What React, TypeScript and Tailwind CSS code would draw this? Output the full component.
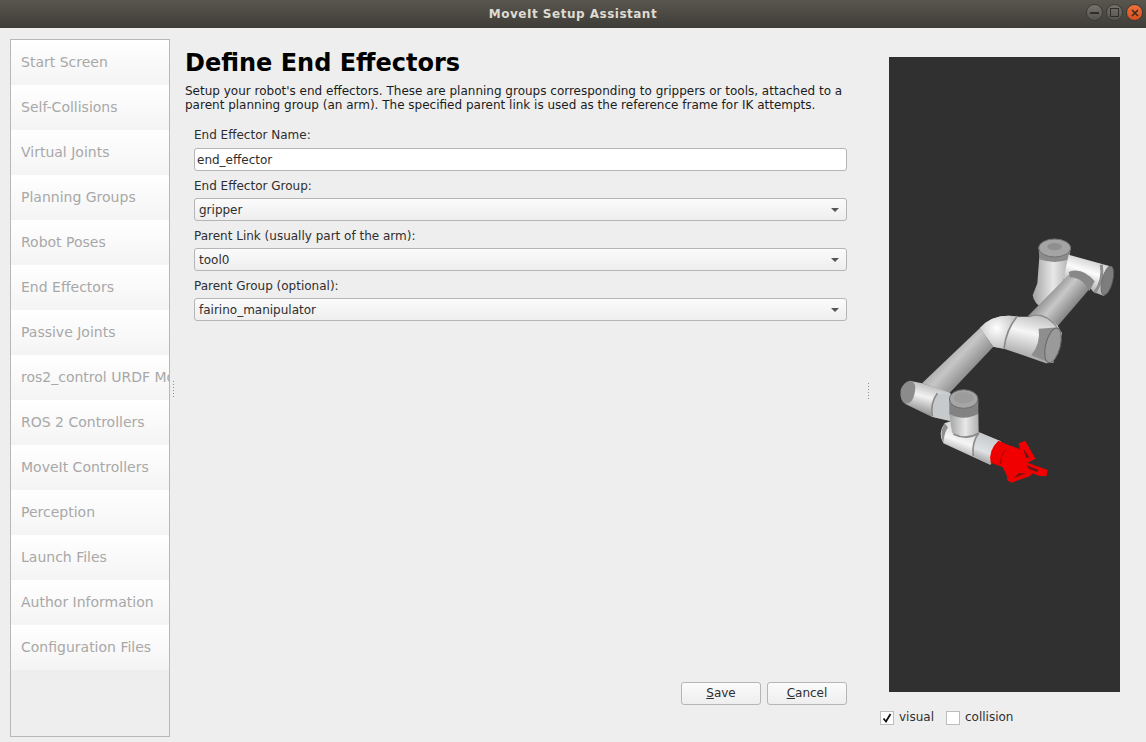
import React from "react";

const navItems = [
  "Start Screen",
  "Self-Collisions",
  "Virtual Joints",
  "Planning Groups",
  "Robot Poses",
  "End Effectors",
  "Passive Joints",
  "ros2_control URDF Modifications",
  "ROS 2 Controllers",
  "MoveIt Controllers",
  "Perception",
  "Launch Files",
  "Author Information",
  "Configuration Files",
];

const fields = [
  { label: "End Effector Group:", value: "gripper" },
  { label: "Parent Link (usually part of the arm):", value: "tool0" },
  { label: "Parent Group (optional):", value: "fairino_manipulator" },
];

const handleDots = [0, 1, 2, 3, 4, 5];

// coordinates are 3x screen pixels, offset from the crop at (880, 220)
function Robot() {
  return (
    <svg className="block h-full w-full" viewBox="27 -489 693 1905">
      <defs>
        <linearGradient id="upperArm" gradientUnits="userSpaceOnUse" x1="200" y1="395" x2="270" y2="460">
          <stop offset="0" stopColor="#a8a8a8" />
          <stop offset="0.4" stopColor="#c6c6c6" />
          <stop offset="1" stopColor="#8c8c8c" />
        </linearGradient>
        <linearGradient id="foreArm" gradientUnits="userSpaceOnUse" x1="505" y1="215" x2="570" y2="270">
          <stop offset="0" stopColor="#8f8f8f" />
          <stop offset="0.45" stopColor="#c8c8c8" />
          <stop offset="1" stopColor="#8a8a8a" />
        </linearGradient>
        <linearGradient id="elbow" gradientUnits="userSpaceOnUse" x1="450" y1="285" x2="420" y2="410">
          <stop offset="0" stopColor="#c4c4c4" />
          <stop offset="0.4" stopColor="#f6f6f6" />
          <stop offset="1" stopColor="#a8a8a8" />
        </linearGradient>
        <radialGradient id="bend" gradientUnits="userSpaceOnUse" cx="350" cy="325" r="70">
          <stop offset="0" stopColor="#ffffff" />
          <stop offset="1" stopColor="#bcbcbc" />
        </radialGradient>
        <linearGradient id="lowerElbow" gradientUnits="userSpaceOnUse" x1="140" y1="490" x2="115" y2="575">
          <stop offset="0" stopColor="#bcbcbc" />
          <stop offset="0.45" stopColor="#f2f2f2" />
          <stop offset="1" stopColor="#969696" />
        </linearGradient>
        <linearGradient id="vertical" x1="0" y1="0" x2="1" y2="0">
          <stop offset="0" stopColor="#a2a2a2" />
          <stop offset="0.55" stopColor="#e8e8e8" />
          <stop offset="1" stopColor="#b0b0b0" />
        </linearGradient>
        <linearGradient id="wristLink" gradientUnits="userSpaceOnUse" x1="270" y1="630" x2="240" y2="710">
          <stop offset="0" stopColor="#d8d8d8" />
          <stop offset="0.5" stopColor="#f6f6f6" />
          <stop offset="1" stopColor="#a4a4a4" />
        </linearGradient>
        <linearGradient id="flange" gradientUnits="userSpaceOnUse" x1="330" y1="650" x2="300" y2="725">
          <stop offset="0" stopColor="#c6cacc" />
          <stop offset="0.6" stopColor="#dfe1e3" />
          <stop offset="1" stopColor="#a0a0a0" />
        </linearGradient>
        <linearGradient id="topElbow" gradientUnits="userSpaceOnUse" x1="640" y1="125" x2="610" y2="215">
          <stop offset="0" stopColor="#d6d6d6" />
          <stop offset="0.35" stopColor="#fcfcfc" />
          <stop offset="1" stopColor="#a6a6a6" />
        </linearGradient>
      </defs>

      {/* base link, top right */}
      <path d="M478 112 L472 190 L458 226 Q462 252 490 266 L548 190 L570 112Z" fill="url(#vertical)" />
      <path d="M476 84 L478 118 Q525 134 568 118 L572 84Z" fill="#8b8b8b" />
      <ellipse cx="524" cy="84" rx="48" ry="27" fill="#a4a4a4" stroke="#737373" strokeWidth="3" />
      <ellipse cx="524" cy="80" rx="22" ry="11" fill="#8f8f8f" />
      <path d="M566 104 L696 140 L672 228 L640 216 L598 160 L548 190 Z" fill="url(#topElbow)" />
      <path d="M664 134 Q672 180 644 218" fill="none" stroke="#8e8e8e" strokeWidth="9" />
      <ellipse cx="682" cy="182" rx="16" ry="45" transform="rotate(14 682 182)" fill="#7d7d7d" stroke="#5c5c5c" strokeWidth="2" />

      {/* fore arm */}
      <path d="M572 158 L636 198 L530 322 L444 288Z" fill="url(#foreArm)" />
      <path d="M566 156 Q606 140 644 184 L628 214 Q608 172 570 172Z" fill="#888888" />

      {/* center elbow */}
      <path d="M300 324 Q342 278 412 290 L446 290 Q484 268 532 316 L546 340 L520 428 L498 430 L372 386 L340 380Z" fill="url(#elbow)" />
      <path d="M300 324 Q342 278 412 290 Q378 330 372 386 L340 380Z" fill="url(#bend)" />
      <path d="M476 326 L536 322 L512 430 L454 406 Q482 370 476 326Z" fill="#8e8e8e" />
      <ellipse cx="519" cy="376" rx="22" ry="53" transform="rotate(14 519 376)" fill="#9a9a9a" stroke="#666666" strokeWidth="3" />
      <path d="M412 288 Q378 330 372 386" fill="none" stroke="#8a8a8a" strokeWidth="5" />
      <path d="M446 290 Q490 272 530 320" fill="none" stroke="#8a8a8a" strokeWidth="4" />

      {/* long link */}
      <path d="M300 324 L340 380 L208 520 L126 490Z" fill="url(#upperArm)" />

      {/* lower elbow */}
      <path d="M88 482 L126 490 L210 518 L214 604 L150 588 L76 552Z" fill="url(#lowerElbow)" />
      <path d="M170 522 L212 520 L214 604 L154 590 Q150 550 170 522Z" fill="#c6cacc" />
      <path d="M172 520 Q150 550 157 590" fill="none" stroke="#8a8a8a" strokeWidth="5" />
      <path d="M90 482 Q112 486 104 520 Q98 552 76 552 Q58 540 62 510 Q70 486 90 482Z" fill="#8b8b8b" />

      {/* lower wrist */}
      <path d="M194 610 Q172 640 190 670 L330 734 L362 664 L296 636 L222 600Z" fill="url(#wristLink)" />
      <path d="M194 610 Q176 640 190 670 Q192 640 204 622Z" fill="#8f8f8f" />
      <path d="M296 638 L362 664 L332 734 L278 708 Q274 668 296 638Z" fill="url(#flange)" />
      <path d="M298 636 Q274 668 280 708" fill="none" stroke="#8a8a8a" strokeWidth="5" />
      <path d="M208 580 L216 638 Q258 664 296 640 L295 580Z" fill="url(#vertical)" />
      <path d="M220 642 Q258 662 296 640" fill="none" stroke="#8a8a8a" strokeWidth="5" />
      <path d="M208 540 L208 582 Q250 604 295 582 L295 540Z" fill="#828282" />
      <ellipse cx="251" cy="537" rx="43" ry="28" fill="#a6a6a6" stroke="#6c6c6c" strokeWidth="3" />
      <ellipse cx="251" cy="533" rx="30" ry="17" fill="#9c9c9c" />

      {/* gripper, offset from the crop at (970, 420) */}
      <g transform="translate(270 600)">
        <path d="M85 62 L128 80 L100 142 L62 128 Q54 92 85 62Z" fill="#ee0000" />
        <path d="M108 88 Q92 104 92 132" fill="none" stroke="#a80000" strokeWidth="3" />
        <path
          d="M125 78 L150 88 L146 70 L166 62 L196 116 L172 128 L233 150 L229 169 L205 167 L172 152 L192 156 L180 168 L125 188 L112 181 L110 165 L96 138Z"
          fill="#f00000"
        />
        <path d="M160 86 L178 112 L168 114Z" fill="#5e1a1a" />
        <path d="M170 136 L206 150 L200 156 L176 146Z" fill="#5e1a1a" />
        <path d="M132 174 L168 160 L146 160Z" fill="#6a1616" />
      </g>
    </svg>
  );
}

function Combo({ value }: { value: string }) {
  return (
    <div className="flex h-[23px] items-center justify-between rounded-[3px] border border-[#b5b5b5] bg-gradient-to-b from-[#fbfbfb] to-[#eeeeee] pl-1 pr-[7px]">
      <span className="pt-px">{value}</span>
      <span className="h-0 w-0 border-x-[4px] border-t-[4px] border-x-transparent border-t-[#555555]" />
    </div>
  );
}

function Button({ accel, rest }: { accel: string; rest: string }) {
  return (
    <button className="h-[23px] w-[80px] rounded-[3px] border border-[#b5b5b5] bg-gradient-to-b from-[#fbfbfb] to-[#eeeeee] text-[#2e2e2e]">
      <span className="underline">{accel}</span>
      {rest}
    </button>
  );
}

function Check({ checked, label }: { checked?: boolean; label: string }) {
  return (
    <label className="flex items-center gap-[5px]">
      <span className="flex h-[14px] w-[14px] items-center justify-center border border-[#bdbdbd] bg-white">
        {checked && (
          <svg width="10" height="10" viewBox="0 0 10 10">
            <path d="M1.5 5.5 L4 8.5 L8.5 1" fill="none" stroke="#111" strokeWidth="1.8" />
          </svg>
        )}
      </span>
      {label}
    </label>
  );
}

function SplitHandle({ className }: { className: string }) {
  return (
    <div className={className}>
      {handleDots.map((dot) => (
        <span key={dot} className="h-px w-px bg-[#8f8f8f]" />
      ))}
    </div>
  );
}

export default function App() {
  return (
    <div className="flex h-[742px] w-[1146px] flex-col overflow-hidden bg-[#eeeeee] font-['DejaVu_Sans',sans-serif] text-[12px] leading-[15px] text-[#2e2e2e]">
      {/* Title bar */}
      <header className="relative flex h-[28px] shrink-0 items-center justify-center bg-gradient-to-b from-[#59564e] to-[#3f3d38]">
        <span className="text-[12px] font-bold tracking-[0.5px] text-[#dfdbd2]">MoveIt Setup Assistant</span>
        <div className="absolute right-[3px] top-[4px] flex gap-[3px]">
          <span className="flex h-[17px] w-[17px] items-center justify-center rounded-full border border-[#3a3a36] bg-gradient-to-b from-[#75736c] to-[#55534d]">
            <span className="h-[2px] w-[9px] bg-[#2f2e2a]" />
          </span>
          <span className="flex h-[17px] w-[17px] items-center justify-center rounded-full border border-[#3a3a36] bg-gradient-to-b from-[#75736c] to-[#55534d]">
            <span className="h-[9px] w-[9px] border border-[#2f2e2a]" />
          </span>
          <span className="flex h-[17px] w-[17px] items-center justify-center rounded-full border border-[#3a3a36] bg-gradient-to-b from-[#f0703a] to-[#d9501e]">
            <svg width="8" height="8" viewBox="0 0 8 8">
              <path d="M1 1 L7 7 M7 1 L1 7" stroke="#3a2a20" strokeWidth="1.6" />
            </svg>
          </span>
        </div>
      </header>

      <div className="flex min-h-0 flex-1 pl-[10px]">
        {/* Step list */}
        <nav className="mb-[5px] mt-[11px] w-[160px] shrink-0 overflow-hidden border border-[#b8b8b8] bg-[#eeeeee]">
          {navItems.map((item) => (
            <div
              key={item}
              className="flex h-[45px] items-center overflow-hidden whitespace-nowrap bg-gradient-to-b from-white to-[#f4f4f4] pl-[10px] text-[14px] text-[#a8a8a8]"
            >
              {item}
            </div>
          ))}
        </nav>

        {/* Form */}
        <main className="relative flex w-[698px] shrink-0 flex-col pl-[15px]">
          <SplitHandle className="absolute left-[3px] top-[353px] flex flex-col gap-[2px]" />
          <h1 className="mt-[20px] text-[24px] font-bold leading-[30px] text-black">Define End Effectors</h1>
          <p className="mt-[6px] w-[670px] leading-[14px] text-[#1c1c1c]">
            Setup your robot's end effectors. These are planning groups corresponding to grippers or tools, attached to
            a parent planning group (an arm). The specified parent link is used as the reference frame for IK attempts.
          </p>
          <div className="ml-[9px] mt-[16px] w-[653px]">
            <div className="mb-[5px]">End Effector Name:</div>
            <div className="flex h-[23px] items-center rounded-[3px] border border-[#b5b5b5] bg-white pl-[2px]">
              <span className="pt-px">end_effector</span>
            </div>
            {fields.map((field) => (
              <div key={field.label}>
                <div className="mb-[4px] mt-[8px]">{field.label}</div>
                <Combo value={field.value} />
              </div>
            ))}
          </div>
          <div className="ml-auto mr-[21px] mt-auto flex gap-[6px] pb-[37px]">
            <Button accel="S" rest="ave" />
            <Button accel="C" rest="ancel" />
          </div>
        </main>

        {/* 3D view */}
        <aside className="relative flex flex-1 flex-col pl-[12px] pr-[26px]">
          <SplitHandle className="absolute left-0 top-[355px] flex flex-col gap-[2px]" />
          <div className="ml-[9px] mt-[29px] h-[635px] w-[231px] bg-[#303030]">
            <Robot />
          </div>
          <div className="mt-[18px] flex gap-3">
            <Check checked label="visual" />
            <Check label="collision" />
          </div>
        </aside>
      </div>
    </div>
  );
}
